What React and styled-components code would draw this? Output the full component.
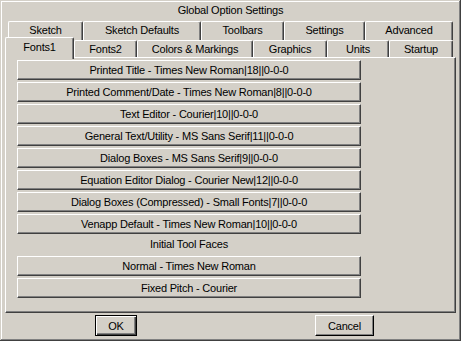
import styled, { createGlobalStyle } from 'styled-components';

const GlobalStyle = createGlobalStyle`
  body {
    margin: 0;
    background: #d4d0c8;
  }
`;

const rowOne = [
  { label: 'Sketch', w: 75 },
  { label: 'Sketch Defaults', w: 118 },
  { label: 'Toolbars', w: 83 },
  { label: 'Settings', w: 81 },
  { label: 'Advanced', w: 88 },
];

const rowTwo = [
  { label: 'Fonts1', w: 69, active: true },
  { label: 'Fonts2', w: 63 },
  { label: 'Colors & Markings', w: 116 },
  { label: 'Graphics', w: 74 },
  { label: 'Units', w: 62 },
  { label: 'Startup', w: 64 },
];

const fontButtons = [
  'Printed Title - Times New Roman|18||0-0-0',
  'Printed Comment/Date - Times New Roman|8||0-0-0',
  'Text Editor - Courier|10||0-0-0',
  'General Text/Utility - MS Sans Serif|11||0-0-0',
  'Dialog Boxes - MS Sans Serif|9||0-0-0',
  'Equation Editor Dialog - Courier New|12||0-0-0',
  'Dialog Boxes (Compressed) - Small Fonts|7||0-0-0',
  'Venapp Default - Times New Roman|10||0-0-0',
];

const toolFaces = ['Normal - Times New Roman', 'Fixed Pitch - Courier'];

export default function App() {
  return (
    <>
      <GlobalStyle />
      <Window>
        <Title>Global Option Settings</Title>
        <TabRow $indent={8}>
          {rowOne.map((t) => (
            <Tab key={t.label} $w={t.w}>{t.label}</Tab>
          ))}
        </TabRow>
        <TabRow $indent={5} $front>
          {rowTwo.map((t) => (
            <Tab key={t.label} $w={t.w} $active={t.active} $front>
              {t.label}
            </Tab>
          ))}
        </TabRow>
        <Panel>
          {fontButtons.map((b) => (
            <FontButton key={b}>{b}</FontButton>
          ))}
          <Caption>Initial Tool Faces</Caption>
          {toolFaces.map((b) => (
            <FontButton key={b}>{b}</FontButton>
          ))}
        </Panel>
        <Footer>
          <DialogButton $w={42} $default>OK</DialogButton>
          <DialogButton $w={59}>Cancel</DialogButton>
        </Footer>
      </Window>
    </>
  );
}

const Window = styled.div`
  width: 461px;
  height: 341px;
  box-sizing: border-box;
  background: #d4d0c8;
  font-family: 'Liberation Sans', Arial, sans-serif;
  font-size: 11px;
  letter-spacing: -0.2px;
  color: #000;
  display: flex;
  flex-direction: column;
  box-shadow: inset -1px -1px #404040, inset 1px 1px #d4d0c8,
    inset -2px -2px #808080, inset 2px 2px #fff;
`;

const Title = styled.div`
  height: 21px;
  line-height: 20px;
  text-align: center;
`;

const TabRow = styled.div`
  display: flex;
  padding-left: ${(p) => p.$indent}px;
  height: ${(p) => (p.$front ? 17 : 19)}px;
  align-items: flex-end;
`;

const Tab = styled.div`
  position: relative;
  z-index: ${(p) => (p.$active ? 2 : 0)};
  box-sizing: border-box;
  width: ${(p) => p.$w}px;
  height: ${(p) => (p.$active ? 22 : p.$front ? 17 : 19)}px;
  margin-bottom: ${(p) => (p.$active ? -2 : 0)}px;
  padding-bottom: ${(p) => (p.$active ? 3 : p.$front ? 1 : 2)}px;
  background: #d4d0c8;
  border-top: 1px solid #fff;
  border-left: 1px solid #fff;
  border-right: 1px solid #404040;
  border-top-left-radius: 2px;
  border-top-right-radius: 2px;
  box-shadow: inset -1px 0 #808080;
  display: flex;
  align-items: center;
  justify-content: center;
  white-space: nowrap;
`;

const Panel = styled.div`
  position: relative;
  z-index: 1;
  margin: 0 5px;
  height: 256px;
  box-sizing: border-box;
  padding: 2px 94px 0 11px;
  border-top: 1px solid #fff;
  border-left: 1px solid #fff;
  border-right: 1px solid #404040;
  border-bottom: 1px solid #404040;
  box-shadow: inset -1px -1px #808080;
  display: flex;
  flex-direction: column;
  gap: 2px;
`;

const FontButton = styled.div`
  height: 20px;
  box-sizing: border-box;
  border-top: 1px solid #fff;
  border-left: 1px solid #fff;
  border-right: 1px solid #404040;
  border-bottom: 1px solid #404040;
  box-shadow: inset -1px -1px #808080;
  display: flex;
  align-items: center;
  justify-content: center;
  padding-bottom: 1px;
  white-space: nowrap;
`;

const Caption = styled.div`
  height: 18px;
  line-height: 16px;
  text-align: center;
`;

const Footer = styled.div`
  display: flex;
  gap: 178px;
  padding: 2px 0 0 95px;
`;

const DialogButton = styled.div`
  width: ${(p) => p.$w}px;
  height: 21px;
  box-sizing: border-box;
  display: flex;
  align-items: center;
  justify-content: center;
  border-top: 1px solid ${(p) => (p.$default ? '#000' : '#fff')};
  border-left: 1px solid ${(p) => (p.$default ? '#000' : '#fff')};
  border-right: 1px solid #000;
  border-bottom: 1px solid #000;
  box-shadow: ${(p) =>
    p.$default
      ? 'inset 1px 1px #fff, inset -1px -1px #404040, inset -2px -2px #808080'
      : 'inset -1px -1px #808080'};
`;
